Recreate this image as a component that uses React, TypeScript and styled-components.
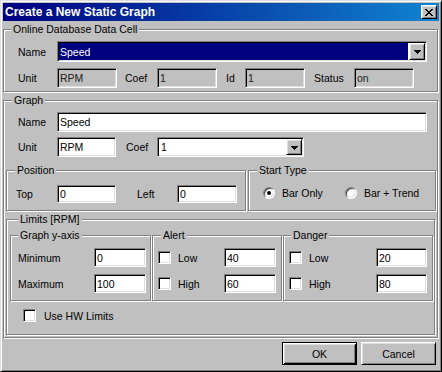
import React from "react";
import styled, { createGlobalStyle } from "styled-components";

const GlobalStyle = createGlobalStyle`
  html, body { margin: 0; padding: 0; background: #c0c0c0; }
  body {
    font-family: "Liberation Sans", Arial, sans-serif;
    font-size: 10.5px;
    color: #000;
  }
  *, *::before, *::after { box-sizing: border-box; }
`;

const Window = styled.div`
  width: 442px;
  height: 372px;
  background: #c0c0c0;
  border: 1px solid;
  border-color: #dfdfdf #000 #000 #dfdfdf;
  box-shadow: inset 1px 1px #fff, inset -1px -1px #808080;
  padding: 2px;
  display: flex;
  flex-direction: column;
`;

const TitleBar = styled.div`
  height: 18px;
  flex-shrink: 0;
  display: flex;
  align-items: center;
  justify-content: space-between;
  padding: 0 2px 0 2px;
  background: linear-gradient(90deg, #000080 0%, #1084d0 100%);
`;

const Title = styled.span`
  color: #fff;
  font-weight: bold;
  font-size: 12px;
  line-height: 18px;
  white-space: nowrap;
`;

const Raised = `
  background: #c0c0c0;
  border: 1px solid;
  border-color: #fff #000 #000 #fff;
  box-shadow: inset 1px 1px #dfdfdf, inset -1px -1px #808080;
`;

const CloseButton = styled.div`
  ${Raised}
  width: 16px;
  height: 14px;
  display: flex;
  align-items: center;
  justify-content: center;
  padding-top: 1px;
`;

const Body = styled.div`
  flex: 1;
  display: flex;
  flex-direction: column;
  padding: 8px 1px 0 0;
`;

const Group = styled.div<{ $pl?: number; $pr?: number; $pb?: number; $w?: number; $grow?: boolean }>`
  border: 1px solid #808080;
  box-shadow: inset 1px 1px #fff, 1px 1px #fff;
  padding: 0 ${(p) => p.$pr ?? 0}px ${(p) => p.$pb ?? 0}px ${(p) => p.$pl ?? 0}px;
  display: flex;
  flex-direction: column;
  ${(p) => (p.$w ? `width: ${p.$w}px; flex-shrink: 0;` : "")}
  ${(p) => (p.$grow ? "flex: 1;" : "")}
`;

const Legend = styled.div<{ $ml: number; $mb: number }>`
  align-self: flex-start;
  height: 13px;
  line-height: 13px;
  margin: -7px 0 ${(p) => p.$mb}px ${(p) => p.$ml}px;
  padding: 0 2px;
  background: #c0c0c0;
  white-space: nowrap;
`;

const Row = styled.div<{ $h: number; $mt?: number; $pl?: number }>`
  display: flex;
  align-items: center;
  height: ${(p) => p.$h}px;
  margin-top: ${(p) => p.$mt ?? 0}px;
  padding-left: ${(p) => p.$pl ?? 0}px;
`;

const Split = styled.div<{ $mt: number; $gap: number }>`
  display: flex;
  align-items: stretch;
  gap: ${(p) => p.$gap}px;
  margin-top: ${(p) => p.$mt}px;
`;

const Label = styled.span<{ $w: number; $ml?: number }>`
  flex-shrink: 0;
  width: ${(p) => p.$w}px;
  margin-left: ${(p) => p.$ml ?? 0}px;
  white-space: nowrap;
`;

const Sunken = `
  border: 1px solid;
  border-color: #808080 #fff #fff #808080;
  box-shadow: inset 1px 1px #000, inset -1px -1px #dfdfdf;
`;

const Edit = styled.input<{ $w: number; $h?: number; $disabled?: boolean }>`
  ${Sunken}
  flex-shrink: 0;
  width: ${(p) => p.$w}px;
  height: ${(p) => p.$h ?? 20}px;
  margin: 0;
  padding: 0 2px;
  font: inherit;
  color: ${(p) => (p.$disabled ? "#202020" : "#000")};
  background: ${(p) => (p.$disabled ? "#c0c0c0" : "#fff")};
  outline: none;
`;

const Combo = styled.div<{ $w: number; $h: number }>`
  ${Sunken}
  flex-shrink: 0;
  width: ${(p) => p.$w}px;
  height: ${(p) => p.$h}px;
  padding: 1px;
  background: #fff;
  display: flex;
`;

const ComboText = styled.div<{ $selected?: boolean }>`
  flex: 1;
  margin-right: 1px;
  display: flex;
  align-items: center;
  padding-left: ${(p) => (p.$selected ? 1 : 2)}px;
  background: ${(p) => (p.$selected ? "#000080" : "#fff")};
  color: ${(p) => (p.$selected ? "#fff" : "#000")};
`;

const DropButton = styled.div`
  ${Raised}
  width: 16px;
  flex-shrink: 0;
  display: flex;
  align-items: center;
  justify-content: center;
  padding-top: 1px;
`;

const CheckBox = styled.span<{ $mr: number }>`
  ${Sunken}
  flex-shrink: 0;
  width: 13px;
  height: 13px;
  background: #fff;
  margin-right: ${(p) => p.$mr}px;
`;

const RadioItem = styled.div<{ $w?: number }>`
  display: flex;
  align-items: center;
  gap: 7px;
  ${(p) => (p.$w ? `width: ${p.$w}px; flex-shrink: 0;` : "")}
  white-space: nowrap;
`;

const Radio = styled.span<{ $checked?: boolean }>`
  position: relative;
  flex-shrink: 0;
  width: 12px;
  height: 12px;
  border-radius: 50%;
  background: #fff;
  border: 1px solid;
  border-color: #808080 #fff #fff #808080;
  box-shadow: inset 1px 1px #404040, inset -1px -1px #dfdfdf;
  &::after {
    content: "";
    display: ${(p) => (p.$checked ? "block" : "none")};
    position: absolute;
    left: 3px;
    top: 3px;
    width: 4px;
    height: 4px;
    border-radius: 50%;
    background: #000;
  }
`;

const ButtonRow = styled.div`
  display: flex;
  justify-content: flex-end;
  gap: 4px;
  margin-top: 4px;
  padding-right: 2px;
`;

const PushButton = styled.div<{ $default?: boolean }>`
  width: 75px;
  height: 23px;
  display: flex;
  align-items: center;
  justify-content: center;
  background: #c0c0c0;
  border: 1px solid;
  ${(p) =>
    p.$default
      ? `border-color: #000;
         box-shadow: inset 1px 1px #fff, inset -1px -1px #000, inset 2px 2px #dfdfdf, inset -2px -2px #808080;`
      : `border-color: #fff #000 #000 #fff;
         box-shadow: inset 1px 1px #dfdfdf, inset -1px -1px #808080;`}
`;

const CloseGlyph = () => (
  <svg width="8" height="7" viewBox="0 0 8 7" shapeRendering="crispEdges">
    <path
      fill="#000"
      d="M0 0h2v1H0z M6 0h2v1H6z M1 1h2v1H1z M5 1h2v1H5z M2 2h4v1H2z M3 3h2v1H3z M2 4h4v1H2z M1 5h2v1H1z M5 5h2v1H5z M0 6h2v1H0z M6 6h2v1H6z"
    />
  </svg>
);

const ArrowGlyph = () => (
  <svg width="7" height="4" viewBox="0 0 7 4" shapeRendering="crispEdges">
    <path fill="#000" d="M0 0h7v1H0z M1 1h5v1H1z M2 2h3v1H2z M3 3h1v1H3z" />
  </svg>
);

const ComboBox = ({ w, h, value, selected }: { w: number; h: number; value: string; selected?: boolean }) => (
  <Combo $w={w} $h={h}>
    <ComboText $selected={selected}>{value}</ComboText>
    <DropButton>
      <ArrowGlyph />
    </DropButton>
  </Combo>
);

const Field = ({ w, h, value, disabled }: { w: number; h?: number; value: string; disabled?: boolean }) => (
  <Edit $w={w} $h={h} $disabled={disabled} value={value} readOnly />
);

export default function App() {
  return (
    <>
      <GlobalStyle />
      <Window>
        <TitleBar>
          <Title>Create a New Static Graph</Title>
          <CloseButton>
            <CloseGlyph />
          </CloseButton>
        </TitleBar>
        <Body>
          <Group $pb={3}>
            <Legend $ml={7} $mb={5}>Online Database Data Cell</Legend>
            <Row $h={21} $pl={14}>
              <Label $w={39}>Name</Label>
              <ComboBox w={370} h={21} value="Speed" selected />
            </Row>
            <Row $h={20} $mt={6} $pl={14}>
              <Label $w={39}>Unit</Label>
              <Field w={60} value="RPM" disabled />
              <Label $w={32} $ml={8}>Coef</Label>
              <Field w={60} value="1" disabled />
              <Label $w={19} $ml={9}>Id</Label>
              <Field w={60} value="1" disabled />
              <Label $w={40} $ml={9}>Status</Label>
              <Field w={60} value="on" disabled />
            </Row>
          </Group>

          <Group $pl={2} $pr={1} $pb={2} style={{ marginTop: 8 }}>
            <Legend $ml={6} $mb={5}>Graph</Legend>
            <Row $h={20} $pl={12}>
              <Label $w={39}>Name</Label>
              <Field w={370} value="Speed" />
            </Row>
            <Row $h={20} $mt={5} $pl={12}>
              <Label $w={39}>Unit</Label>
              <Field w={59} value="RPM" />
              <Label $w={31} $ml={10}>Coef</Label>
              <ComboBox w={147} h={20} value="1" />
            </Row>

            <Split $mt={13} $gap={2}>
              <Group $w={240} $pb={7}>
                <Legend $ml={8} $mb={8}>Position</Legend>
                <Row $h={18} $pl={9}>
                  <Label $w={41}>Top</Label>
                  <Field w={59} h={18} value="0" />
                  <Label $w={40} $ml={21}>Left</Label>
                  <Field w={60} h={18} value="0" />
                </Row>
              </Group>
              <Group $grow>
                <Legend $ml={8} $mb={8}>Start Type</Legend>
                <Row $h={15} $pl={14}>
                  <RadioItem $w={82}>
                    <Radio $checked />
                    <span>Bar Only</span>
                  </RadioItem>
                  <RadioItem>
                    <Radio />
                    <span>Bar + Trend</span>
                  </RadioItem>
                </Row>
              </Group>
            </Split>

            <Group $pl={3} $pr={1} $pb={12} style={{ marginTop: 8, marginRight: 1 }}>
              <Legend $ml={8} $mb={9}>Limits [RPM]</Legend>
              <Split $mt={0} $gap={1}>
                <Group $w={141} $pb={7}>
                  <Legend $ml={7} $mb={6}>Graph y-axis</Legend>
                  <Row $h={19} $pl={7}>
                    <Label $w={76}>Minimum</Label>
                    <Field w={52} h={19} value="0" />
                  </Row>
                  <Row $h={19} $mt={7} $pl={7}>
                    <Label $w={76}>Maximum</Label>
                    <Field w={52} h={19} value="100" />
                  </Row>
                </Group>
                <Group $w={130} $pb={7}>
                  <Legend $ml={8} $mb={6}>Alert</Legend>
                  <Row $h={19} $pl={5}>
                    <CheckBox $mr={7} />
                    <Label $w={46}>Low</Label>
                    <Field w={52} h={19} value="40" />
                  </Row>
                  <Row $h={19} $mt={7} $pl={5}>
                    <CheckBox $mr={7} />
                    <Label $w={46}>High</Label>
                    <Field w={52} h={19} value="60" />
                  </Row>
                </Group>
                <Group $w={150} $pb={7}>
                  <Legend $ml={7} $mb={6}>Danger</Legend>
                  <Row $h={19} $pl={5}>
                    <CheckBox $mr={7} />
                    <Label $w={67}>Low</Label>
                    <Field w={51} h={19} value="20" />
                  </Row>
                  <Row $h={19} $mt={7} $pl={5}>
                    <CheckBox $mr={7} />
                    <Label $w={67}>High</Label>
                    <Field w={51} h={19} value="80" />
                  </Row>
                </Group>
              </Split>
              <Row $h={13} $mt={8} $pl={13}>
                <CheckBox $mr={8} />
                <span>Use HW Limits</span>
              </Row>
            </Group>
          </Group>

          <ButtonRow>
            <PushButton $default>OK</PushButton>
            <PushButton>Cancel</PushButton>
          </ButtonRow>
        </Body>
      </Window>
    </>
  );
}
